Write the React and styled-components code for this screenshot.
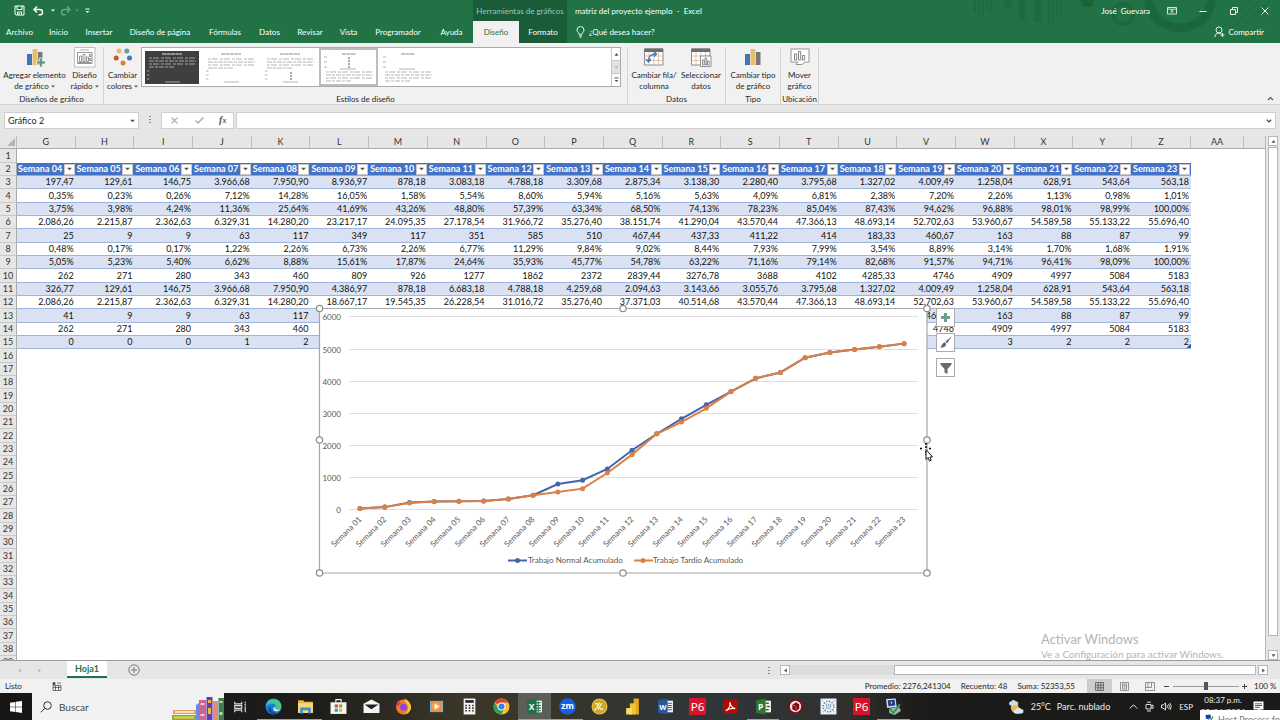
import React, { useState } from "react";
import styled, { createGlobalStyle } from "styled-components";

const GlobalStyle = createGlobalStyle`
  * {
    box-sizing: border-box;
  }

  body {
    margin: 0;
    font-family: Lato, "Open Sans", sans-serif;
    font-size: 8px;
    line-height: 12px;
    color: #262626;
  }

  button,
  input {
    font: inherit;
    color: inherit;
    margin: 0;
    padding: 0;
    border: 0;
    background: none;
    outline: none;
  }

  svg {
    display: block;
    flex: none;
  }
`;

const Page = styled.div`
  display: flex;
  flex-direction: column;
  height: 100vh;
  overflow: hidden;
  background: #e6e6e6;
`;

/* ---------- header ---------- */

const Header = styled.header`
  position: relative;
  flex: none;
  background: #217346;
  color: #fff;
`;

const HeaderArt = styled.svg`
  position: absolute;
  top: 0;
  right: 0;
`;

const HeaderRow = styled.div`
  position: relative;
  display: flex;
  align-items: stretch;
  height: ${(p) => p.$height}px;
`;

const QuickAccess = styled.div`
  display: flex;
  align-items: center;
  width: 473px;
  padding-left: 13px;
`;

const ContextLabel = styled.div`
  display: flex;
  align-items: center;
  justify-content: center;
  width: 94px;
  background: #1a5c38;
  color: #a3c4b1;
  white-space: nowrap;
`;

const DocTitle = styled.div`
  display: flex;
  align-items: center;
  flex: 1;
  padding-left: 8px;
  white-space: pre;
`;

const WindowButtons = styled.div`
  display: flex;
  align-items: center;

  button {
    display: flex;
    justify-content: center;
    width: 31px;
  }
`;

const UserName = styled.span`
  align-self: center;
  margin-right: 6px;
  white-space: pre;
`;

const IconButton = styled.button`
  display: flex;
  align-items: center;
  justify-content: center;
  width: ${(p) => p.$width || 12}px;
  opacity: ${(p) => (p.$faded ? 0.35 : 1)};
`;

const Tab = styled.button`
  width: ${(p) => p.$width}px;
  color: ${(p) => (p.$active ? "#217346" : "#fff")};
  background: ${(p) =>
    p.$active ? "#f1f1f1" : p.$context ? "#1a5c38" : "transparent"};
  white-space: nowrap;
`;

const TellMe = styled.button`
  display: flex;
  align-items: center;
  gap: 4px;
  margin-left: 9px;
`;

const Share = styled(TellMe)`
  gap: 3px;
  margin-left: auto;
  margin-right: 16px;
`;

/* ---------- ribbon ---------- */

const Ribbon = styled.div`
  display: flex;
  flex: none;
  height: 62px;
  padding-top: 4px;
  background: #f1f1f1;
  border-bottom: 1px solid #d2d2d2;
`;

const Group = styled.section`
  display: flex;
  flex-direction: column;
  width: ${(p) => p.$width}px;
  height: 57px;
  border-right: 1px solid #d4d4d4;
`;

const GroupBody = styled.div`
  display: flex;
  justify-content: center;
  flex: 1;
`;

const GroupLabel = styled.div`
  text-align: center;
  line-height: 10px;
  white-space: nowrap;
`;

const BigButton = styled.button`
  display: flex;
  flex-direction: column;
  align-items: center;
  justify-content: flex-start;
  width: ${(p) => p.$width}px;
  line-height: 11px;
  white-space: nowrap;
`;

const BigIcon = styled.span`
  display: flex;
  align-items: flex-start;
  height: 23px;
`;

const CaretText = styled.span`
  display: flex;
  align-items: center;
  gap: 2px;
`;

const Gallery = styled.div`
  display: flex;
  flex: 1;
  height: 40px;
  margin-right: 6px;
  background: #fff;
  border: 1px solid #ababab;
`;

const Thumb = styled.button`
  display: flex;
  align-items: center;
  justify-content: center;
  width: 59px;
  height: 38px;
  border: 2px solid ${(p) => (p.$active ? "#bdbdbd" : "transparent")};
`;

const GalleryScroll = styled.div`
  display: flex;
  flex-direction: column;
  width: 9px;
  margin-left: auto;
  border-left: 1px solid #c6c6c6;

  button {
    flex: 1;
    display: flex;
    align-items: center;
    justify-content: center;
  }

  button + button {
    border-top: 1px solid #c6c6c6;
  }

  button:nth-child(2) {
    background: #e3e3e3;
  }
`;

const Collapse = styled.button`
  align-self: flex-end;
  margin: 0 6px 2px auto;
`;

/* ---------- formula bar ---------- */

const FormulaBar = styled.div`
  display: flex;
  align-items: center;
  flex: none;
  height: 31px;
  padding: 0 4px;

  > * {
    height: 17px;
  }
`;

const Field = styled.label`
  display: flex;
  align-items: center;
  width: ${(p) => (p.$width ? `${p.$width}px` : "auto")};
  flex: ${(p) => (p.$width ? "none" : 1)};
  padding: 0 3px;
  background: #fff;
  border: 1px solid #cfcfcf;

  input {
    flex: 1;
    min-width: 0;
    font-size: 9px;
  }
`;

const Dots = styled.span`
  display: flex;
  align-items: center;
  justify-content: center;
  width: 22px;
`;

const FormulaButtons = styled.div`
  display: flex;
  align-items: center;
  justify-content: space-around;
  width: 73px;
  margin-right: 2px;
  background: #fff;
  border: 1px solid #cfcfcf;
`;

const FxButton = styled.button`
  font-family: "Liberation Serif", serif;
  font-size: 10px;
  font-style: italic;
  font-weight: 700;
  line-height: 12px;
  color: #555;

  sub {
    font-size: 8px;
    vertical-align: baseline;
  }
`;

/* ---------- sheet ---------- */

const SheetArea = styled.main`
  position: relative;
  display: flex;
  flex: 1;
  min-height: 0;
  overflow: hidden;
`;

const Canvas = styled.div`
  flex: 1;
  min-width: 0;
  background: #fff;
  border-right: 1px solid #b5b5b5;
  overflow: hidden;
`;

const Grid = styled.table`
  width: 100%;
  table-layout: fixed;
  border-collapse: separate;
  border-spacing: 0;
  font-size: 9px;
  line-height: 12px;
  color: #111;

  th,
  td {
    padding: 0;
    white-space: nowrap;
    overflow: hidden;
  }

  tbody tr {
    height: 13px;
  }

  tbody tr:nth-child(3n + 1) {
    height: 14px;
  }
`;

const ColHead = styled.th`
  height: 13px;
  font-weight: 400;
  color: #333;
  background: #e6e6e6;
  border-right: 1px solid #bdbdbd;
  border-bottom: 1px solid #ababab;

  &:last-child {
    border-right: 0;
  }
`;

const Corner = styled(ColHead)`
  svg {
    margin-left: auto;
  }
`;

const RowHead = styled.th`
  font-weight: 400;
  color: #333;
  background: #e6e6e6;
  border-right: 1px solid #ababab;
  border-bottom: 1px solid #c9c9c9;
`;

const FieldHead = styled.th`
  background: #4472c4;
  border-bottom: 1px solid #8ea9db;
  color: #fff;
  font-weight: 700;

  div {
    display: flex;
    align-items: center;
    justify-content: space-between;
    padding: 0 1px;
  }

  button {
    display: flex;
    align-items: center;
    justify-content: center;
    width: 11px;
    height: 11px;
    background: #fff;
    border: 1px solid #c8c8c8;
  }
`;

const Cell = styled.td`
  text-align: right;
  background: ${(p) => (p.$band ? "#d9e1f2" : "#fff")};
  border-bottom: 1px solid #9db4de;

  &:not(:empty) {
    padding-right: 2px;
  }

  tr:nth-child(15) > &:last-child {
    background: linear-gradient(135deg, transparent 50%, #3558a6 50%) right
      bottom / 4px 4px no-repeat #d9e1f2;
  }
`;

const ChartFrame = styled.figure`
  position: absolute;
  top: 167px;
  left: 314px;
  margin: 0;

  text {
    font-size: 8px;
    fill: #595959;
  }
`;

const ChartTools = styled.div`
  position: absolute;
  top: 172px;
  left: 936px;
  display: flex;
  flex-direction: column;
  gap: 6px;

  button {
    display: flex;
    align-items: center;
    justify-content: center;
    width: 19px;
    height: 19px;
    background: #fff;
    border: 1px solid #ababab;
  }
`;

const Pointer = styled.svg`
  position: absolute;
  top: 307px;
  left: 920px;
`;

const Watermark = styled.div`
  position: absolute;
  right: 56px;
  bottom: 0;
  width: 183px;
  color: #b4b4b4;
  font-size: 10px;
  line-height: 12px;
  white-space: nowrap;

  strong {
    display: block;
    font-size: 13px;
    font-weight: 400;
    line-height: 18px;
  }
`;

const VerticalBar = styled.div`
  display: flex;
  flex-direction: column;
  gap: 1px;
  width: 14px;
  padding: 0 2px;
`;

const ScrollButton = styled.button`
  display: flex;
  align-items: center;
  justify-content: center;
  width: 10px;
  height: 10px;
  background: #fff;
  border: 1px solid #b5b5b5;
`;

const VerticalThumb = styled.div`
  flex: 1;
  margin-bottom: 13px;
  background: #fff;
  border: 1px solid #b5b5b5;
`;

/* ---------- sheet tabs and status bar ---------- */

const SheetTabs = styled.div`
  display: flex;
  align-items: center;
  flex: none;
  height: 19px;
  padding-right: 12px;
  border-top: 1px solid #9c9c9c;
`;

const SheetNav = styled.div`
  display: flex;
  justify-content: space-around;
  width: 67px;
  padding: 0 18px 0 10px;
`;

const SheetTab = styled.button`
  align-self: flex-start;
  width: 40px;
  height: 17px;
  background: #fff;
  border-bottom: 2px solid #217346;
  color: #217346;
  font-size: 9px;
  font-weight: 700;
`;

const AddSheet = styled.button`
  margin-left: 21px;
`;

const Spacer = styled.div`
  flex: 1;
`;

const HorizontalBar = styled.div`
  display: flex;
  flex: none;
  width: 488px;

  > i {
    width: 104px;
    background: #dcdcdc;
  }

  > b {
    flex: 1;
    margin-right: 2px;
    background: #fff;
    border: 1px solid #b5b5b5;
  }
`;

const StatusBar = styled.footer`
  display: flex;
  align-items: center;
  flex: none;
  height: 14px;
  padding: 0 5px;
  background: #f1f1f1;
`;

const StatusMode = styled.span`
  width: 47px;
`;

const Totals = styled.div`
  display: flex;
  gap: 10px;
  margin: 0 12px 0 auto;
`;

const ViewButton = styled.button`
  display: flex;
  align-items: center;
  justify-content: center;
  width: 25px;
  height: 14px;
  background: ${(p) => (p.$active ? "#cdcdcd" : "transparent")};
`;

const ZoomSlider = styled.input`
  appearance: none;
  width: 66px;
  height: 8px;
  margin: 0 3px;
  background: linear-gradient(#9a9a9a, #9a9a9a) center / 100% 1px no-repeat;

  &::-webkit-slider-thumb {
    appearance: none;
    width: 4px;
    height: 8px;
    background: #555;
  }
`;

const ZoomLevel = styled.span`
  width: 21px;
  margin-left: 7px;
  white-space: nowrap;
`;

/* ---------- taskbar ---------- */

const Taskbar = styled.nav`
  position: relative;
  display: flex;
  align-items: stretch;
  flex: none;
  height: 27px;
  color: #eee;
  background: linear-gradient(
    90deg,
    #161616 0%,
    #1d1c1a 24%,
    #3a3729 36%,
    #37352a 44%,
    #2f3539 55%,
    #31312f 66%,
    #1b1b19 72%,
    #1a1a1a 100%
  );
`;

const Start = styled.button`
  display: flex;
  align-items: center;
  justify-content: center;
  width: 32px;
`;

const Search = styled.label`
  display: flex;
  align-items: center;
  gap: 7px;
  width: 192px;
  padding-left: 8px;
  background: #f2f2f2;
  color: #333;

  input {
    flex: 1;
    min-width: 0;
    font-size: 10px;
  }

  input::placeholder {
    color: #444;
    opacity: 1;
  }

  svg:last-child {
    align-self: flex-end;
  }
`;

const Apps = styled.div`
  display: flex;
  width: 686px;
`;

const AppButton = styled.button`
  display: flex;
  align-items: center;
  justify-content: center;
  flex: 1;
  background: ${(p) => (p.$active ? "#5c5e58" : "transparent")};
  border-top: 1px solid transparent;
  border-bottom: 1px solid ${(p) => (p.$open ? "#76a9dc" : "transparent")};
`;

const Tray = styled.div`
  display: flex;
  align-items: center;
  gap: 7px;
  margin-left: auto;
  padding-right: 16px;
`;

const Weather = styled.div`
  display: flex;
  align-items: center;
  gap: 6px;
  margin-right: 12px;
  font-size: 9px;
  white-space: nowrap;
`;

const Clock = styled.time`
  align-self: flex-start;
  width: 46px;
  padding-top: 1px;
  text-align: center;
`;

const Toast = styled.div`
  position: absolute;
  right: 0;
  bottom: 0;
  display: flex;
  gap: 4px;
  width: 80px;
  height: 10px;
  padding: 4px 0 0 5px;
  overflow: hidden;
  background: #fff;
  color: #777;
  font-size: 9px;
  white-space: nowrap;
`;

/* ---------- data ---------- */

const tabs = [
  ["Archivo", 39],
  ["Inicio", 39],
  ["Insertar", 42],
  ["Diseño de página", 80],
  ["Fórmulas", 50],
  ["Datos", 39],
  ["Revisar", 42],
  ["Vista", 35],
  ["Programador", 64],
  ["Ayuda", 43],
  ["Diseño", 46],
  ["Formato", 48],
];

const columns = "GHIJKLMNOPQRSTUVWXYZ".split("");

const rows = [
  "197,47 129,61 146,75 3.966,68 7.950,90 8.936,97 878,18 3.083,18 4.788,18 3.309,68 2.875,34 3.138,30 2.280,40 3.795,68 1.327,02 4.009,49 1.258,04 628,91 543,64 563,18",
  "0,35% 0,23% 0,26% 7,12% 14,28% 16,05% 1,58% 5,54% 8,60% 5,94% 5,16% 5,63% 4,09% 6,81% 2,38% 7,20% 2,26% 1,13% 0,98% 1,01%",
  "3,75% 3,98% 4,24% 11,36% 25,64% 41,69% 43,26% 48,80% 57,39% 63,34% 68,50% 74,13% 78,23% 85,04% 87,43% 94,62% 96,88% 98,01% 98,99% 100,00%",
  "2.086,26 2.215,87 2.362,63 6.329,31 14.280,20 23.217,17 24.095,35 27.178,54 31.966,72 35.276,40 38.151,74 41.290,04 43.570,44 47.366,13 48.693,14 52.702,63 53.960,67 54.589,58 55.133,22 55.696,40",
  "25 9 9 63 117 349 117 351 585 510 467,44 437,33 411,22 414 183,33 460,67 163 88 87 99",
  "0,48% 0,17% 0,17% 1,22% 2,26% 6,73% 2,26% 6,77% 11,29% 9,84% 9,02% 8,44% 7,93% 7,99% 3,54% 8,89% 3,14% 1,70% 1,68% 1,91%",
  "5,05% 5,23% 5,40% 6,62% 8,88% 15,61% 17,87% 24,64% 35,93% 45,77% 54,78% 63,22% 71,16% 79,14% 82,68% 91,57% 94,71% 96,41% 98,09% 100,00%",
  "262 271 280 343 460 809 926 1277 1862 2372 2839,44 3276,78 3688 4102 4285,33 4746 4909 4997 5084 5183",
  "326,77 129,61 146,75 3.966,68 7.950,90 4.386,97 878,18 6.683,18 4.788,18 4.259,68 2.094,63 3.143,66 3.055,76 3.795,68 1.327,02 4.009,49 1.258,04 628,91 543,64 563,18",
  "2.086,26 2.215,87 2.362,63 6.329,31 14.280,20 18.667,17 19.545,35 26.228,54 31.016,72 35.276,40 37.371,03 40.514,68 43.570,44 47.366,13 48.693,14 52.702,63 53.960,67 54.589,58 55.133,22 55.696,40",
  "41 9 9 63 117 - - - - - - - - - - 460,67 163 88 87 99",
  "262 271 280 343 460 - - - - - - - - - - 4746 4909 4997 5084 5183",
  "0 0 0 1 2 - - - - - - - - - - - 3 2 2 2",
].map((row) => row.split(" ").map((v) => (v === "-" ? "" : v)));

const normal = [
  44, 90, 237, 262, 271, 280, 343, 460, 809, 926, 1277, 1862, 2372, 2839, 3277,
  3688, 4102, 4285, 4746, 4909, 4997, 5084, 5183,
];

const late = [
  44, 90, 221, 262, 271, 280, 343, 460, 560, 665, 1152, 1725, 2372, 2740, 3166,
  3688, 4102, 4285, 4746, 4909, 4997, 5084, 5183,
];

const pad = (n) => String(n).padStart(2, "0");

/* ---------- icons ---------- */

const Caret = ({ color = "#555", size = 4 }) => (
  <svg width={size} height={size - 1} viewBox="0 0 4 3">
    <path d="M0 0.5h4l-2 2z" fill={color} />
  </svg>
);

const Arrow = ({ turn = 0, color = "#555" }) => (
  <svg width="5" height="5" viewBox="0 0 5 5">
    <path
      d="M0.5 3.8h4L2.5 1z"
      fill={color}
      transform={`rotate(${turn} 2.5 2.5)`}
    />
  </svg>
);

const SaveIcon = () => (
  <svg width="11" height="11" viewBox="0 0 11 11" fill="none" stroke="#fff">
    <path d="M1 1h9v9H2L1 9z M3 1v3.5h5V1 M3.5 10V7h4v3" />
    <path d="M5 8v2" />
  </svg>
);

const UndoIcon = ({ flip }) => (
  <svg width="11" height="10" viewBox="0 0 11 10" fill="none" stroke="#fff">
    <g transform={flip ? "translate(11 0) scale(-1 1)" : undefined}>
      <path d="M1 3.5h5.5a3 2.6 0 010 5.3H5.5" strokeWidth="1.4" />
      <path d="M4 0.6L1 3.5 4 6.4" strokeWidth="1.4" />
    </g>
  </svg>
);

const CustomizeIcon = () => (
  <svg width="5" height="6" viewBox="0 0 5 6">
    <path d="M0.5 0.5h4v1h-4z M0.5 3h4l-2 2z" fill="#fff" />
  </svg>
);

const BulbIcon = () => (
  <svg width="9" height="12" viewBox="0 0 9 12" fill="none" stroke="#fff" strokeWidth="0.9">
    <path d="M3 8.2C3 6.8 1 6.2 1 4a3.5 3.5 0 017 0c0 2.2-2 2.8-2 4.2z M3 9.8h3 M3.5 11.2h2" />
  </svg>
);

const ShareIcon = () => (
  <svg width="11" height="12" viewBox="0 0 11 12" fill="none" stroke="#fff" strokeWidth="0.9">
    <circle cx="5" cy="4" r="3" />
    <path d="M1 11c0-2.5 1.5-4 4-4 1.2 0 2 .3 2.7 1 M8.5 7v4 M6.5 9h4" />
  </svg>
);

const RibbonModeIcon = () => (
  <svg width="10" height="8" viewBox="0 0 10 8" fill="none" stroke="#fff" strokeWidth="0.8">
    <path d="M0.5 0.5h9v6.5h-9z M0.5 2.2h9 M5 6.2V3.3 M3.5 4.6L5 3.2l1.5 1.4" />
  </svg>
);

const BarsIcon = ({ plus }) => (
  <svg width="20" height="20" viewBox="0 0 20 20">
    <path d="M2 7h5v11H2z" fill="#3f74b5" />
    <path d="M7.5 2h5v16h-5z" fill="#e6c069" />
    <path d="M13 5h4.5v13H13z" fill="#787878" />
    {plus && (
      <path
        d="M14.5 11h3v3h3v3h-3v3h-3v-3h-3v-3h3z"
        fill="#5f9a7f"
        stroke="#f1f1f1"
        strokeWidth="0.8"
      />
    )}
  </svg>
);

const LayoutIcon = () => (
  <svg width="22" height="21" viewBox="0 0 22 21" fill="none" stroke="#7c7c7c" strokeWidth="0.8">
    <path d="M0.5 0.5h20.5v19.5H0.5z" fill="#fff" stroke="#b2b2b2" />
    <path d="M6 3h9" stroke="#9a9a9a" />
    <path d="M3.5 5.5h14.5v11H3.5z M5.5 9v5.5h2V9z M9 7.5v7h2v-7z M12.5 10v4.5h2V10z" />
    <path d="M15.5 7.5h1.5v2h-1.5z M15.5 11.5h1.5v2h-1.5z M4 15.5h13" />
  </svg>
);

const ColorsIcon = () => (
  <svg width="20" height="20" viewBox="0 0 20 20">
    <circle cx="6" cy="4" r="2.5" fill="#e5bd68" />
    <circle cx="13.8" cy="4" r="2.5" fill="#6d9b95" />
    <circle cx="3.2" cy="11" r="2.5" fill="#c8532d" />
    <circle cx="16.5" cy="11" r="2.5" fill="#4479b5" />
    <circle cx="10" cy="16" r="2.5" fill="#d38331" />
  </svg>
);

const TableIcon = ({ chart }) => (
  <svg width="22" height="20" viewBox="0 0 22 20" fill="none">
    <path d="M1.5 2h18.5v16H1.5z" fill="#fff" stroke="#8a8a8a" />
    <path d="M1.5 1.5h18.5v3.5H1.5z" fill="#6d6d6d" />
    <path d="M1.5 9h18.5 M1.5 13.5h18.5 M6 5v13 M10.8 5v13 M15.5 5v13" stroke="#d8b9a0" strokeWidth="0.8" />
    {chart ? (
      <g stroke="#777" strokeWidth="0.8">
        <path d="M10.5 9h10.5v10.5H10.5z" fill="#fff" />
        <path d="M12.5 13v5h1.7v-5z M15 11v7h1.7v-7z M17.5 14v4h1.7v-4z" />
      </g>
    ) : (
      <g stroke="#3f74b5" strokeWidth="1.3">
        <path d="M5.5 14.5c0-5 2-7.5 7.5-7.5" />
        <path d="M3 12l2.5 3L8 12 M11 4.8L13.5 7 11 9.5" />
      </g>
    )}
  </svg>
);

const MoveIcon = () => (
  <svg width="20" height="20" viewBox="0 0 20 20" fill="none" stroke="#8a8a8a" strokeWidth="0.9">
    <path d="M1 2h18v13h-4l-3 2.5H6L8 15H1z" fill="#fff" />
    <path d="M4.5 7v6h2.2V7z M8.5 4.5V13h2.2V4.5z M12.5 8.5V13h2.2V8.5z" stroke="#777" />
  </svg>
);

const StyleThumb = ({ kind }) => {
  const ink = kind === 0 ? "#a5a5a5" : "#b4b4b4";
  const top = kind === 0 ? 7 : kind < 3 ? 8 : 21;
  return (
    <svg width="54" height="33" viewBox="0 0 54 33" fill="none">
      {kind === 0 && <path d="M0 0h54v33H0z" fill="#3f3f3f" />}
      <path
        d={kind < 3 ? "M17 3h20" : "M20 3h14"}
        stroke={kind === 0 ? "#eee" : "#8a8a8a"}
        strokeDasharray="4 0.5"
      />
      {[0, 1, 2, 3].map((i) => (
        <path
          key={i}
          d={`M4 ${top + i * 3}h${i === 3 ? 26 : 47}`}
          stroke={ink}
          strokeDasharray={i % 2 ? "5 1 3 1" : "3 1 6 2"}
        />
      ))}
      {kind >= 3 && <path d="M2 6h3 M2 11h3 M2 16h3 M18 18h16" stroke={ink} />}
      {kind < 3 && <path d="M2 20h2.5 M2 24h2.5 M2 28h2.5 M20 31h15" stroke={ink} />}
      {kind === 2 && <path d="M28 21v9" stroke="#555" strokeDasharray="2 1" />}
      {kind === 3 && <path d="M27 6v11" stroke="#555" strokeDasharray="2 1" />}
    </svg>
  );
};

/* ---------- chart ---------- */

const px = (i) => 46 + i * 24.73;
const py = (v) => 207 - v * 0.0321;

const Series = ({ values, color }) => (
  <g>
    <polyline
      points={values.map((v, i) => `${px(i)},${py(v)}`).join(" ")}
      fill="none"
      stroke={color}
      strokeWidth="2"
    />
    {values.map((v, i) => (
      <circle key={i} cx={px(i)} cy={py(v)} r="2.5" fill={color} />
    ))}
  </g>
);

const Chart = () => (
  <ChartFrame>
    <svg width="620" height="278" viewBox="0 0 620 278">
      <path d="M5.5 5.5h607.5v264.5h-607.5z" fill="#fff" stroke="#a6a6a6" strokeWidth="1.2" />
      {[0, 1, 2, 3, 4, 5, 6].map((n) => (
        <g key={n}>
          <path d={`M35 ${Math.round(py(n * 1000)) - 0.5}H604`} stroke="#dedede" />
          <text x="27" y={Math.round(py(n * 1000)) + 3} textAnchor="end">
            {n * 1000}
          </text>
        </g>
      ))}
      {normal.map((_, i) => (
        <text
          key={i}
          x={px(i) + 2}
          y="217"
          textAnchor="end"
          transform={`rotate(-45 ${px(i) + 2} 217)`}
        >
          Semana {pad(i + 1)}
        </text>
      ))}
      <Series values={normal} color="#4466a8" />
      <Series values={late} color="#dd8044" />
      <path d="M194 257.5h19" stroke="#4466a8" strokeWidth="2" />
      <circle cx="203.5" cy="257.5" r="2.5" fill="#4466a8" />
      <text x="214" y="260">Trabajo Normal Acumulado</text>
      <path d="M320 257.5h19" stroke="#dd8044" strokeWidth="2" />
      <circle cx="329" cy="257.5" r="2.5" fill="#dd8044" />
      <text x="339" y="260">Trabajo Tardio Acumulado</text>
      {[5.5, 309, 613].map((x) =>
        [5.5, 137, 270].map((y) =>
          x === 309 && y === 137 ? null : (
            <circle key={`${x}-${y}`} cx={x} cy={y} r="3.2" fill="#fff" stroke="#8c8c8c" strokeWidth="1.2" />
          )
        )
      )}
    </svg>
  </ChartFrame>
);

/* ---------- taskbar icons ---------- */

const Glyph = ({ children, size = 17 }) => (
  <svg width={size} height={size} viewBox="0 0 16 16">
    {children}
  </svg>
);

const Label = ({ x, y, size, children, bold = 700 }) => (
  <text
    x={x}
    y={y}
    fontSize={size}
    fontWeight={bold}
    fill="#fff"
    textAnchor="middle"
    fontFamily="Open Sans, sans-serif"
  >
    {children}
  </text>
);

const P6Icon = (
  <Glyph>
    <path d="M0 0h16v16H0z" fill="#d8122b" />
    <Label x={8} y={12} size={11} bold={400}>
      P6
    </Label>
  </Glyph>
);

const apps = [
  {
    name: "Vista de tareas",
    icon: (
      <Glyph size={14}>
        <path
          d="M2 2v2.5h8V2 M2 14v-2.5h8V14 M2 6.5h8v3H2z M14 2v2 M14 7v7 M13 5.5h2"
          fill="none"
          stroke="#ddd"
          strokeWidth="1.3"
        />
      </Glyph>
    ),
  },
  {
    name: "Edge",
    open: true,
    icon: (
      <Glyph>
        <circle cx="8" cy="8" r="7.5" fill="#1b7fd0" />
        <path d="M1 6a7.5 7.5 0 0114.5 2c0 2-1.5 3.2-3.5 3.2s-2.7-.8-2.2-1.7C11 7 9 5 6 5 3.5 5 1.5 6.5 0.6 8z" fill="#48c98a" />
        <path d="M1 6C3 3 9 2.5 10.5 7 9 4.8 4 5 0.6 8z" fill="#2fb5e0" />
        <path d="M6 8c-1.5 3.5 2 6.5 6.5 5.5-2 2-6 2.6-8.5 0C2 11.5 2.5 9 6 8z" fill="#0f4f9e" />
        <path d="M9.8 9.5c-.6.9.2 1.7 2.2 1.7 1 0 2-.4 2.7-1-1 2.3-4 3-6 1.5C7.5 10.7 8 9 8.5 8.5z" fill="#e9f5fb" />
      </Glyph>
    ),
  },
  {
    name: "Explorador",
    open: true,
    icon: (
      <Glyph>
        <path d="M1 2h5l1 1.5h8V14H1z" fill="#e9b845" />
        <path d="M1 5h14v9H1z" fill="#f8d775" />
        <path d="M3 9h10v5.5h-2.5v-3h-5v3H3z" fill="#3f8fd6" />
      </Glyph>
    ),
  },
  {
    name: "Store",
    icon: (
      <Glyph>
        <path d="M0.5 4h15v11h-15z" fill="#f4f4f4" />
        <path d="M5.5 4V1.5h5V4" fill="none" stroke="#f4f4f4" />
        <path d="M4.5 6h3v3h-3z" fill="#e34f2a" />
        <path d="M8.5 6h3v3h-3z" fill="#7bb02c" />
        <path d="M4.5 10h3v3h-3z" fill="#2d9fd9" />
        <path d="M8.5 10h3v3h-3z" fill="#f2b51d" />
      </Glyph>
    ),
  },
  {
    name: "Correo",
    icon: (
      <Glyph>
        <path d="M0.5 5.5L8 1.5l7.5 4V14h-15z" fill="#f5f5f5" />
        <path d="M1.5 6h13L8 10.5 6 9.5z" fill="#222" />
      </Glyph>
    ),
  },
  {
    name: "Firefox",
    icon: (
      <Glyph>
        <circle cx="8" cy="8.5" r="7" fill="#f2792b" />
        <path d="M9 0.5c3 1.5 6.5 5 6 9-.3 3-3 6-7 6 4-2 5-5 4-8C11.5 5 9 4 9 0.5z" fill="#fbc63a" />
        <path d="M1 8c0-3 1-5 2.5-6 0 1.5 1 2 2.5 2.5L4 7z" fill="#e23a5c" />
        <circle cx="8" cy="8.8" r="3.3" fill="#8a49d6" />
      </Glyph>
    ),
  },
  {
    name: "Reproductor",
    icon: (
      <Glyph size={15}>
        <path d="M1 2h14v12H1z" fill="#7fb0cc" />
        <path d="M3 3h10v10H3z" fill="#e98a3d" />
        <circle cx="7.5" cy="8" r="4.2" fill="#f4a45f" />
        <path d="M6 5l5 3-5 3z" fill="#fff" />
      </Glyph>
    ),
  },
  {
    name: "Calculadora",
    icon: (
      <Glyph>
        <path d="M2.5 0.5h11v15h-11z" fill="#f5f5f5" />
        <path d="M4 2h8v2.5H4z" fill="#222" />
        <path d="M4 7h8 M4 9.5h8 M4 12h8" stroke="#333" strokeWidth="1.5" strokeDasharray="1.5 1.75" />
      </Glyph>
    ),
  },
  {
    name: "Chrome",
    icon: (
      <Glyph>
        <circle cx="8" cy="8" r="7.5" fill="#f3c22b" />
        <path d="M8 8L1.5 4.25A7.5 7.5 0 0114.5 4.25L8 4.5z" fill="#dc4335" />
        <path d="M1.5 4.25A7.5 7.5 0 007.5 15.5L11 9.8 5 9.7z" fill="#2ea052" />
        <circle cx="8" cy="8" r="3.7" fill="#fff" />
        <circle cx="8" cy="8" r="2.9" fill="#3f7fe8" />
      </Glyph>
    ),
  },
  {
    name: "Excel",
    active: true,
    open: true,
    icon: (
      <Glyph>
        <path d="M8 2.5h7v11H8z" fill="#f2f7f4" />
        <path d="M9 4.5h5 M9 7h5 M9 9.5h5 M9 12h5 M11.5 3v10" stroke="#217346" />
        <path d="M1 2l9-1.5v15L1 14z" fill="#1e7145" />
        <Label x={5.3} y={11} size={8}>
          X
        </Label>
      </Glyph>
    ),
  },
  {
    name: "Zoom",
    open: true,
    icon: (
      <Glyph>
        <circle cx="8" cy="8" r="7.8" fill="#1660e8" />
        <Label x={8} y={10.5} size={8}>
          zm
        </Label>
      </Glyph>
    ),
  },
  {
    name: "Planificador",
    icon: (
      <Glyph>
        <circle cx="8" cy="8" r="7.5" fill="#e3c445" />
        <circle cx="8" cy="8" r="6.5" fill="#cfa722" />
        <path d="M3 11.5C5 11 6.500 8 8 4.5 M6.500 11c1-1.500 2-3.500 3.500-6 M4 6c1-1.200 2.500-1 2 .8 M9 9.500c0 1.800 1.300 1.500 2.300.3" fill="none" stroke="#fff" />
      </Glyph>
    ),
  },
  {
    name: "Power BI",
    icon: (
      <Glyph>
        <path d="M9 0.5h5v15H9z" fill="#eaa61c" />
        <path d="M5.5 5h5.5v10.5H5.5z" fill="#f3c332" />
        <path d="M2 9.5h5.5v6H2z" fill="#f9dc6d" />
      </Glyph>
    ),
  },
  {
    name: "Word",
    icon: (
      <Glyph>
        <path d="M8 2.5h7v11H8z" fill="#f4f7fb" />
        <path d="M10 5h4 M10 7h4 M10 9h4 M10 11h4" stroke="#2a5699" />
        <path d="M1 2l9-1.5v15L1 14z" fill="#2a5699" />
        <Label x={5.4} y={11} size={7}>
          W
        </Label>
      </Glyph>
    ),
  },
  { name: "P6 Professional", icon: P6Icon },
  {
    name: "Acrobat",
    icon: (
      <Glyph>
        <path d="M3 1h10q2 0 2 2v10q0 2-2 2H3q-2 0-2-2V3q0-2 2-2z" fill="#b30b00" />
        <path d="M3.5 12c3-1.5 4.5-5 4-8 .5 3 2.5 5.5 5 6-3-.8-6 0-9 2z" fill="none" stroke="#fff" strokeWidth="1.2" />
      </Glyph>
    ),
  },
  {
    name: "Project",
    open: true,
    icon: (
      <Glyph>
        <path d="M8 2.5h7v11H8z" fill="#f2f7f0" />
        <path d="M10 5h3 M11 8h3 M10 11h3" stroke="#31752f" strokeWidth="1.3" />
        <path d="M1 2l9-1.5v15L1 14z" fill="#31752f" />
        <Label x={5.4} y={11} size={8}>
          P
        </Label>
      </Glyph>
    ),
  },
  {
    name: "Cinta",
    icon: (
      <Glyph>
        <circle cx="8" cy="8" r="7.3" fill="#7c1017" />
        <circle cx="8" cy="8" r="5.3" fill="#f1e9e9" />
        <path d="M5 6.5L8.5 4l3 2v4l-3 2.5L5 10.5z" fill="#6e0d14" />
        <path d="M5 6.5l3.5 1.3v4.7" fill="none" stroke="#d9484f" />
      </Glyph>
    ),
  },
  {
    name: "Red",
    icon: (
      <Glyph>
        <path d="M0.5 0.5h15v15h-15z" fill="#eef3f8" />
        <circle cx="8" cy="8" r="5" fill="none" stroke="#5c7fa6" strokeWidth="1.5" strokeDasharray="1.2 1.4" />
        <circle cx="8" cy="8" r="2" fill="none" stroke="#5c7fa6" strokeDasharray="1 1" />
        <path d="M2 2l12 12 M14 2L2 14" stroke="#8aa6c4" strokeDasharray="1 1.5" />
      </Glyph>
    ),
  },
  { name: "P6", icon: P6Icon },
  {
    name: "Servidor",
    open: true,
    icon: (
      <Glyph>
        <path d="M1 1l9-.5 1 8-9 1z" fill="#d9dde3" />
        <path d="M2.5 2l6.5-.3.7 5.3-6.5.8z" fill="#1c3f94" />
        <path d="M5 3l2 1-1 2z" fill="#f2cf3b" />
        <path d="M4 10l9-2 2 4-6 4-5-2z" fill="#aab4bf" />
        <path d="M5 10.5l3 3.5 6-8" fill="none" stroke="#2f9d4c" strokeWidth="2" />
      </Glyph>
    ),
  },
];

const Books = () => (
  <svg width="52" height="24" viewBox="0 0 52 24">
    <path d="M1 14h23v4H1z" fill="#e79a63" />
    <path d="M3 15h19v2H3z" fill="#fae2b9" />
    <path d="M0 19h25v5H0z" fill="#8fae2f" />
    <path d="M2 20.5h20v2H2z" fill="#e6d24c" />
    <path d="M24 9l3-2v17h-3z" fill="#6c8ae0" />
    <path d="M27 4h7v20h-7z" fill="#d5618f" />
    <path d="M28.5 7h4v2h-4z M28.5 18h4v2h-4z" fill="#f6c9d6" />
    <path d="M34.5 1h6v23h-6z" fill="#5f3fb5" />
    <path d="M36 4h3v3h-3z M36 12h3v6h-3z" fill="#f0b93c" />
    <path d="M41 5h5v19h-5z" fill="#e38a7c" />
    <path d="M46.5 2h5.5v22h-5.5z" fill="#3f7d53" />
    <path d="M47.5 5h3v2h-3z M47.5 16h3v3h-3z" fill="#b9d8a6" />
  </svg>
);

/* ---------- app ---------- */

const RibbonButton = ({ width, icon, lines, caret }) => (
  <BigButton $width={width}>
    <BigIcon>{icon}</BigIcon>
    <span>{lines[0]}</span>
    <CaretText>
      {lines[1]}
      {caret && <Caret />}
    </CaretText>
  </BigButton>
);

const Sheet = () => (
  <Grid>
    <colgroup>
      <col style={{ width: 17 }} />
      {columns.map((c) => (
        <col key={c} />
      ))}
      <col style={{ width: 53 }} />
      <col style={{ width: 21 }} />
    </colgroup>
    <thead>
      <tr>
        <Corner>
          <svg width="10" height="10" viewBox="0 0 10 10">
            <path d="M9 1v8H1z" fill="#b5b5b5" />
          </svg>
        </Corner>
        {columns.map((c) => (
          <ColHead key={c}>{c}</ColHead>
        ))}
        <ColHead>AA</ColHead>
        <ColHead />
      </tr>
    </thead>
    <tbody>
      {Array.from({ length: 39 }, (_, r) => (
        <tr key={r}>
          <RowHead>{r + 1}</RowHead>
          {r === 1 &&
            columns.map((c, i) => (
              <FieldHead key={c}>
                <div>
                  Semana {pad(i + 4)}
                  <button aria-label="Filtro">
                    <Caret size={5} />
                  </button>
                </div>
              </FieldHead>
            ))}
          {rows[r - 2] &&
            rows[r - 2].map((value, i) => (
              <Cell key={i} $band={r % 2 === 0}>
                {value}
              </Cell>
            ))}
        </tr>
      ))}
    </tbody>
  </Grid>
);

const App = () => {
  const [active, setActive] = useState("Diseño");
  const [thumb, setThumb] = useState(3);
  const [zoom, setZoom] = useState(50);

  return (
    <Page>
      <GlobalStyle />
      <Header>
        <HeaderArt width="320" height="43" viewBox="0 0 320 43" fill="none" stroke="#1b6339">
          <path d="M15 0v12 M19 0v16 M23 0v14 M27 0v10 M31 0v13 M89 0v24 M93 0v22 M97 0v18 M101 0v14" strokeWidth="1.5" opacity="0.7" />
          <path d="M62 0v20 M78 0v22 M48 0v8" strokeWidth="7" opacity="0.5" />
          <path d="M120 0h14l-2 7h-9z" fill="#1b6339" stroke="none" />
          <circle cx="163" cy="14" r="10" strokeWidth="4" opacity="0.7" />
          <circle cx="220" cy="-4" r="32" strokeWidth="9" opacity="0.8" />
          <path d="M262 28L290 0 M272 28L300 0 M282 28L310 0" opacity="0.7" />
        </HeaderArt>
        <HeaderRow $height={21}>
          <QuickAccess>
            <IconButton aria-label="Guardar">
              <SaveIcon />
            </IconButton>
            <IconButton $width={26} aria-label="Deshacer">
              <UndoIcon />
            </IconButton>
            <Caret color="#fff" />
            <IconButton $width={20} $faded aria-label="Rehacer">
              <UndoIcon flip />
            </IconButton>
            <Caret color="#5a957a" />
            <IconButton $width={16} aria-label="Personalizar">
              <CustomizeIcon />
            </IconButton>
          </QuickAccess>
          <ContextLabel>Herramientas de gráficos</ContextLabel>
          <DocTitle>matriz del proyecto ejemplo  -  Excel</DocTitle>
          <UserName>José  Guevara</UserName>
          <WindowButtons>
            <button aria-label="Opciones de cinta">
              <RibbonModeIcon />
            </button>
            <button aria-label="Minimizar">
              <svg width="8" height="8" viewBox="0 0 8 8">
                <path d="M0.5 4.5h7" stroke="#fff" />
              </svg>
            </button>
            <button aria-label="Restaurar">
              <svg width="8" height="8" viewBox="0 0 8 8" fill="none" stroke="#fff" strokeWidth="0.9">
                <path d="M0.5 2.5h5v5h-5z M2.5 2.5v-2h5v5h-2" />
              </svg>
            </button>
            <button aria-label="Cerrar">
              <svg width="8" height="8" viewBox="0 0 8 8" stroke="#fff" strokeWidth="0.9">
                <path d="M0.5 0.5l7 7 M7.5 0.5l-7 7" />
              </svg>
            </button>
          </WindowButtons>
        </HeaderRow>
        <HeaderRow $height={22}>
          {tabs.map(([name, width], i) => (
            <Tab
              key={name}
              $width={width}
              $context={i > 9}
              $active={name === active}
              onClick={() => setActive(name)}
            >
              {name}
            </Tab>
          ))}
          <TellMe>
            <BulbIcon />
            ¿Qué desea hacer?
          </TellMe>
          <Share>
            <ShareIcon />
            Compartir
          </Share>
        </HeaderRow>
      </Header>

      <Ribbon>
        <Group $width={104}>
          <GroupBody>
            <RibbonButton width={66} icon={<BarsIcon plus />} lines={["Agregar elemento", "de gráfico"]} caret />
            <RibbonButton width={34} icon={<LayoutIcon />} lines={["Diseño", "rápido"]} caret />
          </GroupBody>
          <GroupLabel>Diseños de gráfico</GroupLabel>
        </Group>
        <Group $width={524}>
          <GroupBody>
            <RibbonButton width={37} icon={<ColorsIcon />} lines={["Cambiar", "colores"]} caret />
            <Gallery>
              {[0, 1, 2, 3, 4].map((n) => (
                <Thumb
                  key={n}
                  $active={n === thumb}
                  aria-label={`Estilo ${n + 1}`}
                  onClick={() => setThumb(n)}
                >
                  <StyleThumb kind={n} />
                </Thumb>
              ))}
              <GalleryScroll>
                <button aria-label="Arriba">
                  <Arrow />
                </button>
                <button aria-label="Abajo">
                  <Arrow turn={180} color="#bbb" />
                </button>
                <button aria-label="Más">
                  <svg width="5" height="6" viewBox="0 0 5 6">
                    <path d="M0.5 0.5h4v1h-4z M0.5 3h4l-2 2z" fill="#555" />
                  </svg>
                </button>
              </GalleryScroll>
            </Gallery>
          </GroupBody>
          <GroupLabel>Estilos de diseño</GroupLabel>
        </Group>
        <Group $width={98}>
          <GroupBody>
            <RibbonButton width={49} icon={<TableIcon />} lines={["Cambiar fila/", "columna"]} />
            <RibbonButton width={45} icon={<TableIcon chart />} lines={["Seleccionar", "datos"]} />
          </GroupBody>
          <GroupLabel>Datos</GroupLabel>
        </Group>
        <Group $width={55}>
          <GroupBody>
            <RibbonButton width={49} icon={<BarsIcon />} lines={["Cambiar tipo", "de gráfico"]} />
          </GroupBody>
          <GroupLabel>Tipo</GroupLabel>
        </Group>
        <Group $width={38}>
          <GroupBody>
            <RibbonButton width={34} icon={<MoveIcon />} lines={["Mover", "gráfico"]} />
          </GroupBody>
          <GroupLabel>Ubicación</GroupLabel>
        </Group>
        <Collapse aria-label="Contraer la cinta">
          <svg width="7" height="7" viewBox="0 0 7 7" fill="none" stroke="#555" strokeWidth="1.2">
            <path d="M1 5l2.5-2.5L6 5" />
          </svg>
        </Collapse>
      </Ribbon>

      <FormulaBar>
        <Field $width={135}>
          <input aria-label="Cuadro de nombres" defaultValue="Gráfico 2" />
          <Caret size={5} />
        </Field>
        <Dots>
          <svg width="2" height="9" viewBox="0 0 2 9">
            <path d="M1 0v9" stroke="#888" strokeWidth="2" strokeDasharray="1 2" />
          </svg>
        </Dots>
        <FormulaButtons>
          <IconButton aria-label="Cancelar">
            <svg width="7" height="7" viewBox="0 0 7 7" stroke="#b0b0b0" strokeWidth="1.2">
              <path d="M0.5 0.5l6 6 M6.5 0.5l-6 6" />
            </svg>
          </IconButton>
          <IconButton aria-label="Introducir">
            <svg width="9" height="7" viewBox="0 0 9 7" fill="none" stroke="#b0b0b0" strokeWidth="1.5">
              <path d="M0.5 3.5L3 6l5.5-5.5" />
            </svg>
          </IconButton>
          <FxButton aria-label="Insertar función">
            f<sub>x</sub>
          </FxButton>
        </FormulaButtons>
        <Field>
          <input aria-label="Barra de fórmulas" />
          <svg width="6" height="6" viewBox="0 0 7 7" fill="none" stroke="#444" strokeWidth="1.4">
            <path d="M1 2l2.5 2.5L6 2" />
          </svg>
        </Field>
      </FormulaBar>

      <SheetArea>
        <Canvas>
          <Sheet />
        </Canvas>
        <VerticalBar>
          <ScrollButton aria-label="Subir">
            <Arrow />
          </ScrollButton>
          <VerticalThumb />
          <ScrollButton aria-label="Bajar">
            <Arrow turn={180} />
          </ScrollButton>
        </VerticalBar>
        <Chart />
        <ChartTools>
          <button aria-label="Elementos de gráfico">
            <svg width="11" height="11" viewBox="0 0 11 11">
              <path d="M4 1h3v3h3v3H7v3H4V7H1V4h3z" fill="#6d9f89" />
            </svg>
          </button>
          <button aria-label="Estilos de gráfico">
            <svg width="13" height="13" viewBox="0 0 13 13">
              <path d="M12.5 0.5L6.5 5.5l1.5 2z" fill="#5a6470" />
              <path d="M5.8 6.2l1.5 1.7C7 10.5 4 12 0.8 11.5 3 10.5 3 7 5.8 6.2z" fill="#5a6470" />
            </svg>
          </button>
          <button aria-label="Filtros de gráfico">
            <svg width="12" height="12" viewBox="0 0 12 12">
              <path d="M0.5 1h11v1.5L7.5 7v5l-3-1.5V7l-4-4.5z" fill="#6b6b6b" />
            </svg>
          </button>
        </ChartTools>
        <Pointer width="14" height="20" viewBox="0 0 14 20">
          <path
            d="M6 0v5 M0 5.500h3 M9 5.500h3 M6 8v4"
            stroke="#000"
            strokeWidth="1.5"
            strokeDasharray="2 1"
          />
          <path d="M6 6.5v10l2-2 1.5 3.5 1.8-.8L9.8 14h2.7z" fill="#fff" stroke="#000" strokeWidth="0.9" />
        </Pointer>
        <Watermark>
          <strong>Activar Windows</strong>
          Ve a Configuración para activar Windows.
        </Watermark>
      </SheetArea>

      <SheetTabs>
        <SheetNav>
          <Arrow turn={-90} color="#b8b8b8" />
          <Arrow turn={90} color="#b8b8b8" />
        </SheetNav>
        <SheetTab>Hoja1</SheetTab>
        <AddSheet aria-label="Hoja nueva">
          <svg width="12" height="12" viewBox="0 0 12 12" fill="none" stroke="#7a7a7a">
            <circle cx="6" cy="6" r="5.2" />
            <path d="M6 3v6 M3 6h6" />
          </svg>
        </AddSheet>
        <Spacer />
        <Dots>
          <svg width="2" height="7" viewBox="0 0 2 7">
            <path d="M1 0v7" stroke="#888" strokeWidth="2" strokeDasharray="1 2" />
          </svg>
        </Dots>
        <HorizontalBar>
          <ScrollButton aria-label="Izquierda">
            <Arrow turn={-90} />
          </ScrollButton>
          <i />
          <b />
          <ScrollButton aria-label="Derecha">
            <Arrow turn={90} />
          </ScrollButton>
        </HorizontalBar>
      </SheetTabs>

      <StatusBar>
        <StatusMode>Listo</StatusMode>
        <svg width="10" height="9" viewBox="0 0 10 9" fill="none" stroke="#555" strokeWidth="0.8">
          <path d="M1 3.5h8v5H1z M1 5.5h8 M3.5 3.5v5 M6.5 3.5v5 M5 1h4" />
          <circle cx="2" cy="1.5" r="1.5" fill="#444" stroke="none" />
        </svg>
        <Totals>
          <span>Promedio: 2276,241304</span>
          <span>Recuento: 48</span>
          <span>Suma: 52353,55</span>
        </Totals>
        <ViewButton $active aria-label="Normal">
          <svg width="9" height="9" viewBox="0 0 9 9" fill="none" stroke="#555">
            <path d="M0.5 0.5h8v8h-8z M0.5 3.2h8 M0.5 5.8h8 M3.2 0.5v8 M5.8 0.5v8" strokeWidth="0.8" />
          </svg>
        </ViewButton>
        <ViewButton aria-label="Diseño de página">
          <svg width="9" height="9" viewBox="0 0 9 9" fill="none" stroke="#777" strokeWidth="0.8">
            <path d="M0.5 0.5h8v8h-8z M2.5 2h4v5h-4z M3.5 3.5h2 M3.5 5h2" />
          </svg>
        </ViewButton>
        <ViewButton aria-label="Salto de página">
          <svg width="10" height="9" viewBox="0 0 10 9" fill="none" stroke="#777" strokeWidth="0.8">
            <path d="M0.5 0.5h9v8h-9z M3 0.5v5h3.5v-5 M0.5 5.5H3" />
          </svg>
        </ViewButton>
        <IconButton $width={8} aria-label="Alejar">
          <svg width="5" height="5" viewBox="0 0 5 5">
            <path d="M0 2.5h5" stroke="#444" />
          </svg>
        </IconButton>
        <ZoomSlider
          type="range"
          aria-label="Zoom"
          value={zoom}
          onChange={(e) => setZoom(e.target.value)}
        />
        <IconButton $width={5} aria-label="Acercar">
          <svg width="5" height="5" viewBox="0 0 5 5">
            <path d="M0 2.5h5 M2.5 0v5" stroke="#444" />
          </svg>
        </IconButton>
        <ZoomLevel>100 %</ZoomLevel>
      </StatusBar>

      <Taskbar>
        <Start aria-label="Inicio">
          <svg width="12" height="12" viewBox="0 0 12 12">
            <path d="M0 1.7l5.5-.8v4.8H0z M6 .8L12 0v5.7H6z M0 6.2h5.5V11L0 10.2z M6 6.2h6V12l-6-.9z" fill="#fff" />
          </svg>
        </Start>
        <Search>
          <svg width="12" height="12" viewBox="0 0 12 12" fill="none" stroke="#333">
            <circle cx="7.5" cy="4.5" r="3.8" />
            <path d="M4.8 7.3L0.8 11.3" />
          </svg>
          <input aria-label="Buscar" placeholder="Buscar" />
          <Books />
        </Search>
        <Apps>
          {apps.map((app) => (
            <AppButton key={app.name} aria-label={app.name} $active={app.active} $open={app.open}>
              {app.icon}
            </AppButton>
          ))}
        </Apps>
        <Tray>
          <Weather>
            <svg width="17" height="16" viewBox="0 0 17 16">
              <path d="M8 2a6.5 6.5 0 107.5 8.5C12 11 9 8 10.5 3.5z" fill="#f2b84b" />
              <path d="M3 6.5a2 2 0 010-4A2.5 2.5 0 017.8 3a1.8 1.8 0 010 3.5z" fill="#cfdcf0" />
              <path d="M8 14.5a2 2 0 010-4 3 3 0 015.5 0 2 2 0 010 4z" fill="#dbe6f6" />
            </svg>
            <span>25°C</span>
            <span>Parc. nublado</span>
          </Weather>
          <svg width="9" height="9" viewBox="0 0 9 9" fill="none" stroke="#eee">
            <path d="M0.8 6.5L4.5 2.8l3.7 3.7" />
          </svg>
          <svg width="9" height="11" viewBox="0 0 9 11" fill="none" stroke="#eee" strokeWidth="0.9">
            <path d="M1 3.5h5v4.5H1z M6 5l2-1v3.5L6 6.5 M2 1.2h4 M2 10h4" />
          </svg>
          <svg width="11" height="9" viewBox="0 0 11 9" fill="none" stroke="#eee" strokeWidth="0.9">
            <path d="M0.5 3h1.5L4.5 1v7L2 6H0.5z M6 3q1 1.5 0 3 M7.5 2q2 2.5 0 5 M9 1q2.5 3.5 0 7" />
          </svg>
          <span>ESP</span>
          <Clock>
            08:37 p.m.
            <br />
            02/04/2024
          </Clock>
          <svg width="11" height="11" viewBox="0 0 11 11">
            <path d="M0.5 0.5h10v8H7l-2 2v-2H0.5z" fill="#fff" />
            <path d="M2 2.8h7 M2 4.5h7 M2 6.3h5" stroke="#333" strokeWidth="0.8" />
          </svg>
        </Tray>
        <Toast>
          <svg width="9" height="9" viewBox="0 0 9 9">
            <path d="M0.5 1l5-.5.5 4-5 .5z" fill="#1c3f94" />
            <path d="M3 5.5l2 2 3-5" fill="none" stroke="#2f9d4c" strokeWidth="1.3" />
          </svg>
          Host Process for
        </Toast>
      </Taskbar>
    </Page>
  );
};

export default App;
